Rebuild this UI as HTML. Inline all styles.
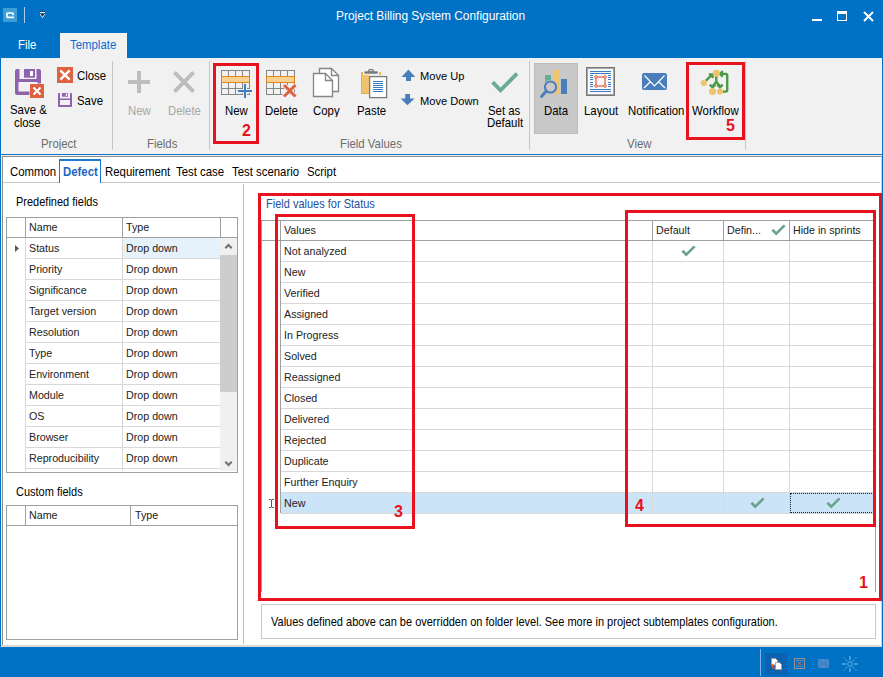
<!DOCTYPE html>
<html><head><meta charset="utf-8">
<style>
*{box-sizing:border-box;margin:0;padding:0}
html,body{width:883px;height:677px;overflow:hidden;background:#fff}
body{position:relative;font-family:"Liberation Sans",sans-serif;font-size:11px;color:#000}
.a{position:absolute}
.t{position:absolute;white-space:nowrap;line-height:13px;font-size:11px;transform:scaleY(1.1);transform-origin:0 0}
.hl{position:absolute;height:1px}
.vl{position:absolute;width:1px}
.red{position:absolute;border:3px solid #E8121E}
.g{font-size:10.7px;transform:none}
.r{font-size:11.4px;transform:scaleY(1.06)}
.num{position:absolute;color:#E8121E;font-weight:bold;font-size:16px;line-height:16px}
</style></head><body>
<!-- title bar -->
<div class="a" style="left:0;top:0;width:883px;height:58px;background:#0072C6"></div>
<div class="a" style="left:3px;top:8px;width:14px;height:14px;background:#43A0D8"></div>
<div class="vl" style="left:24px;top:7px;height:16px;background:#A9CDEB"></div>
<div class="t" style="left:336px;top:8px;font-size:11.9px;line-height:14px;color:#fff">Project Billing System Configuration</div>
<!-- tabs -->
<div class="t r" style="left:18px;top:38px;color:#fff">File</div>
<div class="a" style="left:60px;top:33px;width:67px;height:26px;background:#F1F1F1"></div>
<div class="t r" style="left:70px;top:38px;color:#0B6CD0">Template</div>
<!-- ribbon -->
<div class="a" style="left:1px;top:58px;width:881px;height:96px;background:#F1F1F1"></div>
<div class="hl" style="left:0;top:154px;width:883px;background:#1274C8"></div>
<div class="a" style="left:0;top:58px;width:1px;height:589px;background:#0072C6"></div>
<div class="a" style="left:882px;top:58px;width:1px;height:589px;background:#0072C6"></div>


<!-- title icons -->
<svg class="a" style="left:3px;top:8px" width="14" height="14"><rect width="14" height="14" fill="#3F9DD6"/><path d="M10.1 7.2 V5.9 Q10.1 5 9.2 5 H4.9 Q3.9 5 3.9 6 V8.3 Q3.9 9.3 4.9 9.3 H11" fill="none" stroke="#fff" stroke-width="1.7"/></svg>
<svg class="a" style="left:39px;top:10px" width="8" height="10"><rect x="1" y="1.2" width="5" height="0.8" fill="#3A3A3A"/><rect x="1" y="2" width="5" height="1" fill="#E8F4FF"/><path d="M0.6 4 H6.4 L3.5 8.3 Z" fill="#F0F8FF"/><path d="M1.5 4 H5.5 L3.5 7 Z" fill="#333"/></svg>
<!-- window controls -->
<div class="a" style="left:812px;top:19px;width:10px;height:2px;background:#fff"></div>
<div class="a" style="left:837px;top:11px;width:10px;height:10px;border:1.5px solid #fff;border-top-width:3px"></div>
<svg class="a" style="left:863px;top:11px" width="11" height="11"><path d="M1 1 L10 10 M10 1 L1 10" stroke="#fff" stroke-width="2"/></svg>

<!-- ribbon: Project group -->
<svg class="a" style="left:15px;top:69px" width="30" height="30">
 <rect x="0" y="0" width="26" height="26" rx="2" fill="#8E62AF"/>
 <rect x="4.5" y="0" width="17" height="10" fill="#F1F1F1"/>
 <rect x="9" y="0" width="11" height="8.7" fill="#8E62AF"/>
 <rect x="15" y="2" width="3" height="5" fill="#fff"/>
 <rect x="3.5" y="13" width="19" height="9.5" fill="#F1F1F1"/>
 <rect x="14.5" y="14.5" width="15" height="15" fill="#F6F6F6"/>
 <rect x="15" y="15" width="14" height="14" fill="#DF6140"/>
 <path d="M18.5 18.5 L25.5 25.5 M25.5 18.5 L18.5 25.5" stroke="#fff" stroke-width="2"/>
</svg>
<div class="t r" style="left:10px;top:103px">Save &amp;</div>
<div class="t r" style="left:14px;top:116px">close</div>
<svg class="a" style="left:57px;top:67px" width="16" height="16"><rect width="16" height="16" fill="#DF6140"/><path d="M3.3 3.3 L12.7 12.7 M12.7 3.3 L3.3 12.7" stroke="#fff" stroke-width="2.4"/></svg>
<div class="t r" style="left:77px;top:69px">Close</div>
<svg class="a" style="left:58px;top:93px" width="14" height="14"><rect width="14" height="14" rx="1" fill="#8E62AF"/><rect x="2" y="0" width="10" height="5.5" fill="#F1F1F1"/><rect x="4" y="0" width="6" height="3.7" fill="#8E62AF"/><rect x="7.7" y="0.7" width="1.5" height="2.3" fill="#fff"/><rect x="2" y="7" width="10" height="5" fill="#F1F1F1"/></svg>
<div class="t r" style="left:77px;top:94px">Save</div>
<div class="t r" style="left:41px;top:137px;color:#6D6D6D">Project</div>
<div class="vl" style="left:112px;top:61px;height:89px;background:#C6C6C6"></div>

<!-- Fields group -->
<svg class="a" style="left:128px;top:71px" width="22" height="22"><path d="M0 11 H22 M11 0 V22" stroke="#BDBDBD" stroke-width="4"/></svg>
<svg class="a" style="left:173px;top:71px" width="22" height="22"><path d="M1.4 1.4 L20.6 20.6 M20.6 1.4 L1.4 20.6" stroke="#BDBDBD" stroke-width="4"/></svg>
<div class="t r" style="left:128px;top:104px;color:#A8A8A8">New</div>
<div class="t r" style="left:168px;top:104px;color:#A8A8A8">Delete</div>
<div class="t r" style="left:147px;top:137px;color:#6D6D6D">Fields</div>
<div class="vl" style="left:209px;top:61px;height:89px;background:#C6C6C6"></div>

<!-- Field Values group -->
<svg class="a" style="left:220px;top:69px" width="34" height="30">
 <g fill="none" stroke="#858585" stroke-width="1">
  <rect x="1.5" y="1.5" width="28" height="24"/>
  <path d="M8.5 1.5 V25.5 M15.5 1.5 V25.5 M22.5 1.5 V25.5 M1.5 19.5 H29.5"/>
 </g>
 <rect x="1.5" y="7.5" width="28" height="6" fill="#F8D195" stroke="#E0861A" stroke-width="1"/>
 <path d="M25 15 V29 M18 22 H32" stroke="#F1F1F1" stroke-width="4"/>
 <path d="M25 15 V29 M18 22 H32" stroke="#3B7CC2" stroke-width="2"/>
</svg>
<div class="t r" style="left:225px;top:104px">New</div>
<svg class="a" style="left:265px;top:69px" width="34" height="30">
 <g fill="none" stroke="#858585" stroke-width="1">
  <rect x="1.5" y="1.5" width="28" height="24"/>
  <path d="M8.5 1.5 V25.5 M15.5 1.5 V25.5 M22.5 1.5 V25.5 M1.5 19.5 H29.5"/>
 </g>
 <rect x="1.5" y="7.5" width="28" height="6" fill="#F8D195" stroke="#E0861A" stroke-width="1"/>
 <path d="M19 16 L30.5 27.5 M30.5 16 L19 27.5" stroke="#F1F1F1" stroke-width="5"/>
 <path d="M19 16 L30.5 27.5 M30.5 16 L19 27.5" stroke="#DF6140" stroke-width="3"/>
</svg>
<div class="t r" style="left:265px;top:104px">Delete</div>

<svg class="a" style="left:312px;top:67px" width="28" height="31">
 <path d="M7.5 1.5 H19.5 L26.5 8.5 V24.5 H7.5 Z" fill="#fff" stroke="#858585" stroke-width="1.3"/>
 <path d="M19.5 1.5 V8.5 H26.5" fill="none" stroke="#858585" stroke-width="1.3"/>
 <path d="M1.5 6.5 H13.5 L20.5 13.5 V29.5 H1.5 Z" fill="#fff" stroke="#858585" stroke-width="1.3"/>
 <path d="M13.5 6.5 V13.5 H20.5" fill="none" stroke="#858585" stroke-width="1.3"/>
</svg>
<div class="t r" style="left:313px;top:104px">Copy</div>

<svg class="a" style="left:360px;top:68px" width="29" height="31">
 <rect x="1" y="6.8" width="8" height="19.2" fill="#F0C36F"/>
 <path d="M1.5 4 V25.5 H9" fill="none" stroke="#E8AE45" stroke-width="1"/>
 <rect x="1" y="4" width="2" height="3" fill="#EDB44E"/>
 <rect x="19.2" y="4" width="1.8" height="3.2" fill="#EDB44E"/>
 <rect x="4.3" y="3.2" width="13.6" height="2.6" rx="1.3" fill="#7A7A7A"/>
 <rect x="8.6" y="1.6" width="4.8" height="2.6" rx="1.3" fill="none" stroke="#7A7A7A" stroke-width="1.2"/>
 <rect x="9.6" y="8.6" width="17" height="21" fill="#fff" stroke="#7A7A7A" stroke-width="1.3"/>
 <path d="M13.3 13.5 H22.8 M13.3 15.5 H22.8 M13.3 17.5 H22.8 M13.3 19.5 H22.8 M13.3 21.5 H22.8 M13.3 23.5 H22.8" stroke="#3B7CC2" stroke-width="1" stroke-linecap="round"/>
</svg>
<div class="t r" style="left:357px;top:104px">Paste</div>

<svg class="a" style="left:400px;top:69px" width="17" height="13"><path d="M8.4 0.5 L15.3 7.9 H11 V12 H6 V7.9 H1.5 Z" fill="#4A7EBB"/></svg>
<div class="t r" style="left:420px;top:69px;font-size:11.1px">Move Up</div>
<svg class="a" style="left:400px;top:93px" width="17" height="13"><path d="M5.2 1 H10 V5.4 H14.6 L7.5 12.3 L0.6 5.4 H5.2 Z" fill="#4A7EBB"/></svg>
<div class="t r" style="left:420px;top:94px;font-size:11.1px">Move Down</div>

<svg class="a" style="left:490px;top:72px" width="30" height="22"><path d="M2.6 10.2 L10.5 18.3 L27 1.6" fill="none" stroke="#6AAB94" stroke-width="3.8"/></svg>
<div class="t r" style="left:488px;top:104px">Set as</div>
<div class="t r" style="left:487px;top:116px">Default</div>
<div class="t r" style="left:340px;top:137px;color:#6D6D6D">Field Values</div>
<div class="vl" style="left:529px;top:61px;height:89px;background:#C6C6C6"></div>

<!-- View group -->
<div class="a" style="left:534px;top:63px;width:44px;height:71px;background:#C8C8C8;border:1px solid #BCBCBC"></div>
<svg class="a" style="left:538px;top:68px" width="32" height="32">
 <rect x="7" y="7" width="6" height="18" fill="#6AAB94"/>
 <rect x="15" y="2" width="6" height="24" fill="#F0C36F"/>
 <rect x="23" y="11" width="6" height="15" fill="#4A7EBB"/>
 <circle cx="12.5" cy="19" r="5.6" fill="#C8C8C8" stroke="#C8C8C8" stroke-width="3.2"/>
 <circle cx="12.5" cy="19" r="5.6" fill="none" stroke="#4A7EBB" stroke-width="2"/>
 <path d="M8.5 23 L3.5 28.5" stroke="#4A7EBB" stroke-width="2.8" stroke-linecap="round"/>
</svg>
<div class="t r" style="left:544px;top:104px">Data</div>

<svg class="a" style="left:586px;top:67px" width="29" height="29">
 <rect x="0.5" y="0.5" width="28" height="28" fill="#F8F8F8" stroke="#777" stroke-width="1"/>
 <rect x="1.5" y="1.5" width="26" height="26" fill="none" stroke="#A8A8A8" stroke-width="1"/>
 <path d="M4 4.5 H25 M4 6.5 H25 M4 22.5 H25 M4 24.5 H25 M4 8.5 H7 M4 10.5 H7 M4 12.5 H7 M4 15.5 H7 M4 17.5 H7 M4 19.5 H7 M22 8.5 H25 M22 10.5 H25 M22 12.5 H25 M22 15.5 H25 M22 17.5 H25 M22 19.5 H25" stroke="#3B7CC2" stroke-width="1"/>
 <rect x="10" y="10" width="9" height="9" fill="none" stroke="#DF6140" stroke-width="1.2"/>
 <g fill="#F8F8F8" stroke="#DF6140" stroke-width="1"><circle cx="10" cy="10" r="1.3"/><circle cx="19" cy="10" r="1.3"/><circle cx="10" cy="19" r="1.3"/><circle cx="19" cy="19" r="1.3"/></g>
</svg>
<div class="t r" style="left:584px;top:104px">Layout</div>

<svg class="a" style="left:642px;top:73px" width="25" height="17">
 <rect x="0" y="0" width="25" height="17" rx="2" fill="#4A7EBB"/>
 <path d="M2.5 2.5 L12.5 12.8 L22.5 2.5 M2 15 L8.6 8.5 M23 15 L16.4 8.5" fill="none" stroke="#fff" stroke-width="1.2"/>
</svg>
<div class="t r" style="left:628px;top:104px">Notification</div>

<svg class="a" style="left:698px;top:68px" width="34" height="30">
 <g fill="none" stroke="#4E9A47" stroke-width="2.4">
  <path d="M7.8 12.8 L14 6.6"/>
  <path d="M10.8 6.4 H14.6 V10"/>
  <path d="M18.3 8 V13.8 L14.5 18.5 M18.3 13.8 L22 18.5"/>
  <path d="M11.8 16.6 L14.5 19.3 L17.2 16.6 M19.3 16.6 L22 19.3 L24.7 16.6"/>
  <path d="M24.5 23.6 H27.6 Q29.2 23.6 29.2 22 V7.5 Q29.2 5.9 27.6 5.9 H22.5"/>
  <path d="M24.8 3.2 L22 5.9 L24.8 8.6"/>
 </g>
 <g fill="#F0C36F"><circle cx="18.3" cy="5.2" r="3.5"/><circle cx="5.9" cy="15" r="3.1"/><circle cx="14.5" cy="23.6" r="3.5"/><circle cx="22" cy="23.6" r="3.1"/></g>
</svg>
<div class="t r" style="left:692px;top:104px">Workflow</div>
<div class="t r" style="left:627px;top:137px;color:#6D6D6D">View</div>
<div class="vl" style="left:745px;top:61px;height:89px;background:#C6C6C6"></div>

<!-- red boxes ribbon -->
<div class="red" style="left:213px;top:63px;width:46px;height:81px"></div>
<div class="num" style="left:242px;top:123px">2</div>
<div class="red" style="left:686px;top:62px;width:59px;height:78px"></div>
<div class="num" style="left:726px;top:118px">5</div>

<!-- content -->
<div class="a" style="left:1px;top:155px;width:881px;height:492px;background:#F1F1F1"></div>
<div class="a" style="left:2px;top:156px;width:880px;height:489px;background:#fff;border:1px solid #8C8C8C;border-right-color:#D0D0D0;border-bottom:none"></div>
<!-- tab strip -->
<div class="hl" style="left:3px;top:182px;width:56px;background:#C8C8C8"></div>
<div class="hl" style="left:101px;top:182px;width:779px;background:#C8C8C8"></div>
<div class="a" style="left:59px;top:159px;width:42px;height:24px;background:#fff;border:1px solid #1E78D0;border-top:2px solid #1E78D0;border-bottom:none"></div>
<div class="t r" style="left:10px;top:165px">Common</div>
<div class="t r" style="left:63px;top:165px;color:#1C64C4;font-weight:bold">Defect</div>
<div class="t r" style="left:105px;top:165px">Requirement</div>
<div class="t r" style="left:176px;top:165px">Test case</div>
<div class="t r" style="left:232px;top:165px">Test scenario</div>
<div class="t r" style="left:307px;top:165px">Script</div>
<!-- left panel -->
<div class="vl" style="left:243px;top:184px;height:460px;background:#BDBDBD"></div>
<div class="t" style="left:16px;top:195px">Predefined fields</div>
<div class="a" style="left:6px;top:217px;width:232px;height:256px;border:1px solid #A0A0A0;background:#fff"></div>
<div class="hl" style="left:7px;top:237px;width:230px;background:#A0A0A0"></div>
<div class="vl" style="left:25px;top:218px;height:19px;background:#A0A0A0"></div>
<div class="vl" style="left:122px;top:218px;height:19px;background:#A0A0A0"></div>
<div class="vl" style="left:220px;top:218px;height:19px;background:#A0A0A0"></div>
<div class="t g" style="left:29px;top:221px;color:#222">Name</div>
<div class="t g" style="left:126px;top:221px;color:#222">Type</div>
<div class="a" style="left:123px;top:238px;width:97px;height:20px;background:#E5F1FB"></div>
<div class="hl" style="left:25px;top:258px;width:195px;background:#D8D8D8"></div>
<div class="t g" style="left:29px;top:242px;color:#222">Status</div>
<div class="t g" style="left:126px;top:242px;color:#222">Drop down</div>
<div class="hl" style="left:25px;top:279px;width:195px;background:#D8D8D8"></div>
<div class="t g" style="left:29px;top:263px;color:#222">Priority</div>
<div class="t g" style="left:126px;top:263px;color:#222">Drop down</div>
<div class="hl" style="left:25px;top:300px;width:195px;background:#D8D8D8"></div>
<div class="t g" style="left:29px;top:284px;color:#222">Significance</div>
<div class="t g" style="left:126px;top:284px;color:#222">Drop down</div>
<div class="hl" style="left:25px;top:321px;width:195px;background:#D8D8D8"></div>
<div class="t g" style="left:29px;top:305px;color:#222">Target version</div>
<div class="t g" style="left:126px;top:305px;color:#222">Drop down</div>
<div class="hl" style="left:25px;top:342px;width:195px;background:#D8D8D8"></div>
<div class="t g" style="left:29px;top:326px;color:#222">Resolution</div>
<div class="t g" style="left:126px;top:326px;color:#222">Drop down</div>
<div class="hl" style="left:25px;top:363px;width:195px;background:#D8D8D8"></div>
<div class="t g" style="left:29px;top:347px;color:#222">Type</div>
<div class="t g" style="left:126px;top:347px;color:#222">Drop down</div>
<div class="hl" style="left:25px;top:384px;width:195px;background:#D8D8D8"></div>
<div class="t g" style="left:29px;top:368px;color:#222">Environment</div>
<div class="t g" style="left:126px;top:368px;color:#222">Drop down</div>
<div class="hl" style="left:25px;top:405px;width:195px;background:#D8D8D8"></div>
<div class="t g" style="left:29px;top:389px;color:#222">Module</div>
<div class="t g" style="left:126px;top:389px;color:#222">Drop down</div>
<div class="hl" style="left:25px;top:426px;width:195px;background:#D8D8D8"></div>
<div class="t g" style="left:29px;top:410px;color:#222">OS</div>
<div class="t g" style="left:126px;top:410px;color:#222">Drop down</div>
<div class="hl" style="left:25px;top:447px;width:195px;background:#D8D8D8"></div>
<div class="t g" style="left:29px;top:431px;color:#222">Browser</div>
<div class="t g" style="left:126px;top:431px;color:#222">Drop down</div>
<div class="hl" style="left:25px;top:468px;width:195px;background:#D8D8D8"></div>
<div class="t g" style="left:29px;top:452px;color:#222">Reproducibility</div>
<div class="t g" style="left:126px;top:452px;color:#222">Drop down</div>
<div class="vl" style="left:25px;top:238px;height:233px;background:#D8D8D8"></div>
<div class="vl" style="left:122px;top:238px;height:233px;background:#D8D8D8"></div>
<svg class="a" style="left:14px;top:244px" width="7" height="10"><path d="M1 1 L5 4.5 L1 8 Z" fill="#5A5A5A"/></svg>
<div class="a" style="left:220px;top:238px;width:17px;height:233px;background:#F0F0F0"></div>
<div class="a" style="left:220px;top:255px;width:17px;height:137px;background:#CDCDCD"></div>
<svg class="a" style="left:224px;top:242px" width="10" height="8"><path d="M1.3 6.3 L4.5 3 L7.7 6.3" fill="none" stroke="#707070" stroke-width="2"/></svg>
<svg class="a" style="left:224px;top:460px" width="10" height="8"><path d="M1.3 1.7 L4.5 5 L7.7 1.7" fill="none" stroke="#707070" stroke-width="2"/></svg>

<div class="t" style="left:16px;top:485px">Custom fields</div>
<div class="a" style="left:6px;top:505px;width:232px;height:135px;border:1px solid #A0A0A0;background:#fff"></div>
<div class="hl" style="left:7px;top:525px;width:230px;background:#A0A0A0"></div>
<div class="vl" style="left:25px;top:506px;height:19px;background:#A0A0A0"></div>
<div class="vl" style="left:130px;top:506px;height:19px;background:#A0A0A0"></div>
<div class="t g" style="left:29px;top:509px;color:#222">Name</div>
<div class="t g" style="left:135px;top:509px;color:#222">Type</div>
<div class="a" style="left:1px;top:645px;width:881px;height:2px;background:#DADADA"></div>
<div class="t" style="left:266px;top:197px;color:#2050A0">Field values for Status</div>
<div class="a" style="left:261px;top:220px;width:615px;height:372px;border:1px solid #A0A0A0;border-bottom:none;border-top:1px solid #A0A0A0"></div>
<div class="hl" style="left:261px;top:240px;width:614px;background:#A0A0A0"></div>
<div class="vl" style="left:280px;top:221px;height:19px;background:#A0A0A0"></div>
<div class="vl" style="left:652px;top:221px;height:19px;background:#A0A0A0"></div>
<div class="vl" style="left:723px;top:221px;height:19px;background:#A0A0A0"></div>
<div class="vl" style="left:789px;top:221px;height:19px;background:#A0A0A0"></div>
<div class="t g" style="left:284px;top:224px;color:#222">Values</div>
<div class="t g" style="left:656px;top:224px;color:#222">Default</div>
<div class="t g" style="left:727px;top:224px;color:#222">Defin...</div>
<div class="t g" style="left:793px;top:224px;color:#222">Hide in sprints</div>
<svg class="a" style="left:771px;top:224px" width="15" height="12"><path d="M1.4 5.8 L5.2 9.6 L13.6 1.4" fill="none" stroke="#6AA38D" stroke-width="2.7"/></svg>
<div class="a" style="left:281px;top:492px;width:594px;height:21px;background:#CCE4F7"></div>
<div class="hl" style="left:281px;top:261px;width:594px;background:#D8D8D8"></div>
<div class="t g" style="left:284px;top:245px;color:#222">Not analyzed</div>
<div class="hl" style="left:281px;top:282px;width:594px;background:#D8D8D8"></div>
<div class="t g" style="left:284px;top:266px;color:#222">New</div>
<div class="hl" style="left:281px;top:303px;width:594px;background:#D8D8D8"></div>
<div class="t g" style="left:284px;top:287px;color:#222">Verified</div>
<div class="hl" style="left:281px;top:324px;width:594px;background:#D8D8D8"></div>
<div class="t g" style="left:284px;top:308px;color:#222">Assigned</div>
<div class="hl" style="left:281px;top:345px;width:594px;background:#D8D8D8"></div>
<div class="t g" style="left:284px;top:329px;color:#222">In Progress</div>
<div class="hl" style="left:281px;top:366px;width:594px;background:#D8D8D8"></div>
<div class="t g" style="left:284px;top:350px;color:#222">Solved</div>
<div class="hl" style="left:281px;top:387px;width:594px;background:#D8D8D8"></div>
<div class="t g" style="left:284px;top:371px;color:#222">Reassigned</div>
<div class="hl" style="left:281px;top:408px;width:594px;background:#D8D8D8"></div>
<div class="t g" style="left:284px;top:392px;color:#222">Closed</div>
<div class="hl" style="left:281px;top:429px;width:594px;background:#D8D8D8"></div>
<div class="t g" style="left:284px;top:413px;color:#222">Delivered</div>
<div class="hl" style="left:281px;top:450px;width:594px;background:#D8D8D8"></div>
<div class="t g" style="left:284px;top:434px;color:#222">Rejected</div>
<div class="hl" style="left:281px;top:471px;width:594px;background:#D8D8D8"></div>
<div class="t g" style="left:284px;top:455px;color:#222">Duplicate</div>
<div class="hl" style="left:281px;top:492px;width:594px;background:#D8D8D8"></div>
<div class="t g" style="left:284px;top:476px;color:#222">Further Enquiry</div>
<div class="hl" style="left:281px;top:513px;width:594px;background:#D8D8D8"></div>
<div class="t g" style="left:284px;top:497px;color:#222">New</div>
<div class="vl" style="left:280px;top:241px;height:272px;background:#A0A0A0"></div>
<div class="vl" style="left:652px;top:241px;height:272px;background:#D8D8D8"></div>
<div class="vl" style="left:723px;top:241px;height:272px;background:#D8D8D8"></div>
<div class="vl" style="left:789px;top:241px;height:272px;background:#D8D8D8"></div>
<svg class="a" style="left:681px;top:245px" width="15" height="12"><path d="M1.4 5.8 L5.2 9.6 L13.6 1.4" fill="none" stroke="#6AA38D" stroke-width="2.7"/></svg>
<svg class="a" style="left:750px;top:497px" width="15" height="12"><path d="M1.4 5.8 L5.2 9.6 L13.6 1.4" fill="none" stroke="#6AA38D" stroke-width="2.7"/></svg>
<svg class="a" style="left:826px;top:497px" width="15" height="12"><path d="M1.4 5.8 L5.2 9.6 L13.6 1.4" fill="none" stroke="#6AA38D" stroke-width="2.7"/></svg>
<div class="a" style="left:790px;top:493px;width:84px;height:20px;border:1px dotted #222"></div>
<svg class="a" style="left:268px;top:498px" width="7" height="11"><path d="M1 1.5 Q2 1 3.5 2 Q5 1 6 1.5 M1 9.5 Q2 10 3.5 9 Q5 10 6 9.5 M3.5 2 V9" fill="none" stroke="#555" stroke-width="1"/></svg>
<div class="a" style="left:261px;top:604px;width:615px;height:35px;border:1px solid #C8C8C8;background:#fff"></div>
<div class="t" style="left:271px;top:615px">Values defined above can be overridden on folder level. See more in project subtemplates configuration.</div>
<div class="red" style="left:258px;top:193px;width:624px;height:408px"></div>
<div class="num" style="left:859px;top:575px">1</div>
<div class="red" style="left:275px;top:214px;width:140px;height:315px"></div>
<div class="num" style="left:394px;top:504px">3</div>
<div class="red" style="left:625px;top:210px;width:251px;height:317px"></div>
<div class="num" style="left:635px;top:498px">4</div>

<!-- status bar -->
<div class="a" style="left:0;top:647px;width:883px;height:30px;background:#0072C6"></div>
<div class="vl" style="left:760px;top:649px;height:27px;background:#7DB3E3"></div>
<div class="a" style="left:765px;top:653px;width:23px;height:22px;background:#0A62B0"></div>
<svg class="a" style="left:770px;top:657px" width="14" height="14">
 <path d="M1.5 1.5 H5.5 L7.5 3.5 V8 H1.5 Z" fill="#fff" stroke="#A89A8E" stroke-width="0.9"/>
 <path d="M5.5 5.5 H9.5 L11.5 7.5 V12.5 H5.5 Z" fill="#fff" stroke="#A89A8E" stroke-width="0.9"/>
 <path d="M2.5 7.5 Q2 10.5 4.8 11.5" fill="none" stroke="#F05A22" stroke-width="1.2"/>
 <path d="M0.8 8.8 L2.5 6.5 L4 8.8 Z" fill="#F05A22"/>
</svg>
<svg class="a" style="left:794px;top:658px" width="11" height="11">
 <rect x="0.5" y="0.5" width="10" height="10" fill="none" stroke="#9C9088" stroke-width="1"/>
 <path d="M2 2.5 H9 M2 8.5 H9" stroke="#4A9ADA" stroke-width="0.8"/>
 <path d="M2.5 4.5 H3 M8 4.5 H8.5 M2.5 6.5 H3 M8 6.5 H8.5" stroke="#4A9ADA" stroke-width="0.8"/>
 <path d="M4.2 3.8 L6.8 6.9 M6.8 3.8 L4.2 6.9" stroke="#E8683A" stroke-width="1"/>
</svg>
<svg class="a" style="left:818px;top:659px" width="11" height="9">
 <rect x="0" y="0" width="11" height="9" rx="1" fill="#4A8ACC"/>
 <path d="M1 1 L5.5 5.5 L10 1 M1 8 L4 5 M10 8 L7 5" fill="none" stroke="#2A70B8" stroke-width="0.9"/>
</svg>
<svg class="a" style="left:842px;top:656px" width="17" height="17">
 <g fill="none" stroke="#3F9AD8">
  <circle cx="8" cy="8" r="2.3" stroke-width="1.4"/>
  <path d="M8 0 V4 M8 12 V16 M0 8 H4 M12 8 H16" stroke-width="2"/>
  <path d="M5 5 L3.8 3.8 M11 5 L12.2 3.8 M5 11 L3.8 12.2 M11 11 L12.2 12.2" stroke-width="1.6"/>
  <path d="M1.5 1.5 L2.5 2.5 M14.5 1.5 L13.5 2.5 M1.5 14.5 L2.5 13.5 M14.5 14.5 L13.5 13.5" stroke-width="1.2"/>
 </g>
</svg>
</body></html>
